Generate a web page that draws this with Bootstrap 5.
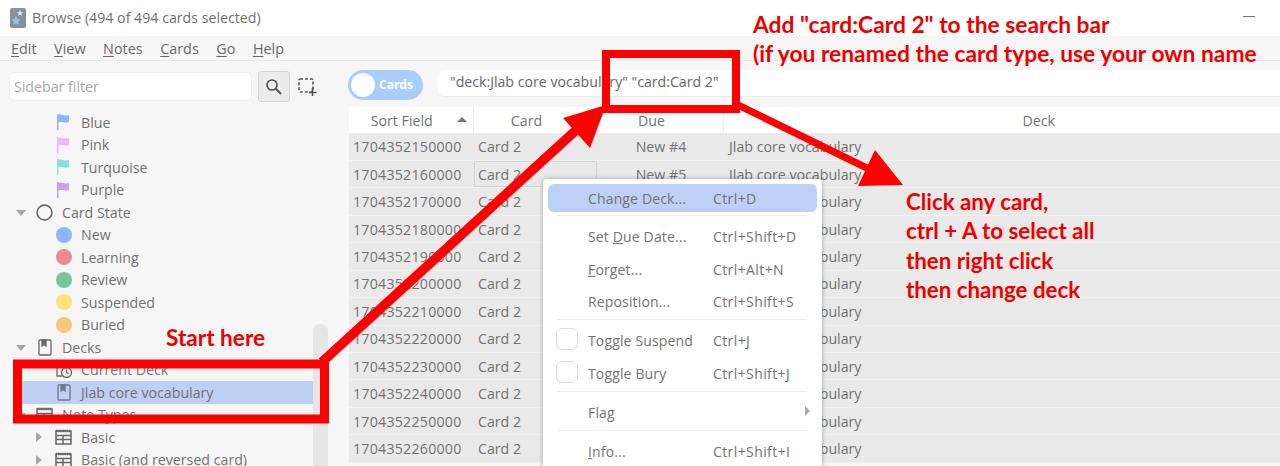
<!DOCTYPE html>
<html lang="en"><head><meta charset="utf-8"><title>Browse</title>
<link href="https://cdn.jsdelivr.net/npm/bootstrap@5.3.0/dist/css/bootstrap.min.css" rel="stylesheet">
<style>
html,body{height:466px;overflow:hidden}
body{background:#f6f6f6;color:#727272;font-family:"Open Sans","Noto Sans","Liberation Sans",sans-serif;font-size:14.2px;position:relative;line-height:1.2}
.titlebar{height:36px;background:#fff;padding-left:10px;gap:6px}
.titletext{color:#6f6f6f}
.winmin{position:absolute;left:1243px;top:16px;width:12px;height:1px;background:#777}
.menubar{height:25px;border-bottom:1px solid #e8e8e8;padding:1px 0 0 11px;gap:17.5px;color:#6a6a6a;font-size:14.4px}
.menubar u{text-underline-offset:2px}
.mainrow{height:405px}
.sidepane{width:340px;flex:none;position:relative}
.filterrow{height:47px;padding:10px 0 0 9px}
.filterbox{width:243px;height:29px;background:#fff;border:1px solid #eee;border-radius:6px;padding:0 4px;color:#a8a8a8;line-height:27px;margin-top:1px}
.searchbtn{width:32px;height:31px;margin-left:6px;background:#ececec;border:1px solid #d5d5d5;border-radius:3px}
.selecticon{margin-left:8px;margin-top:7px}
.treelist{list-style:none;margin:3px 0 0;padding:0;height:358px;overflow:hidden}
.treeitem{height:22.5px;display:flex;align-items:center;position:relative;white-space:nowrap}
.icobox{width:19px;flex:none;display:flex;justify-content:center;align-items:center}
.lv0{padding-left:35px}.lv1{padding-left:54px}
.lab{margin-left:8px}
.caret-dn{position:absolute;left:16px;top:9px;border:5px solid transparent;border-top:6px solid #a6a6a6;border-bottom:0}
.caret-rt{position:absolute;left:36px;top:6px;border:5px solid transparent;border-left:6px solid #a6a6a6;border-right:0}
.sel-row{background:#bdd0f3;margin-left:13px;padding-left:41px;width:300px}
.dot{width:16px;height:16px;border-radius:50%;display:block}
.scrolltrack{position:absolute;left:313px;top:263px;width:15px;height:160px;background:#e6e6e6;border-radius:7px}
.rightpane{flex:1;min-width:0;padding-left:9px;overflow:hidden}
.toolrow{height:46px;padding-top:8px;margin-left:-1px}
.togglepill{width:75px;height:30px;background:#a9cdfc;border-radius:15px;color:#fff;font-weight:700;font-size:12px;position:relative;padding-left:31px;line-height:30px;margin-top:1px}
.togglepill::before{content:"";position:absolute;left:3px;top:3px;width:24px;height:24px;background:#fff;border-radius:50%}
.queryinput{flex:1;margin-left:15px;height:27px;background:#fff;border-radius:6px 0 0 6px;border-bottom:1px solid #ececec;padding-left:12px;line-height:24px;color:#666;white-space:nowrap;margin-top:1px;letter-spacing:-.02px}
.cardtable{margin:0;table-layout:fixed;width:1024px;max-width:none;--bs-table-bg:transparent;--bs-table-color:#727272;border-color:#f3f3f3}
.cardtable th{height:26px;background:#fff;font-weight:400;text-align:center;padding:2px 18px 0 0;vertical-align:middle;border-right:1px solid #eee;border-bottom:0;position:relative;color:#727272}
.cardtable td{height:27.45px;background:#e9e9e9;padding:0 4px 0 5px;vertical-align:middle;border-bottom:1px solid #f1f1f1;white-space:nowrap;overflow:hidden}
.cardtable td.numcell{letter-spacing:.24px;padding-left:4px}
.cardtable td.mid{text-align:center}
.cardtable td.deckcell{padding-left:6px}
.activecell{outline:1px solid #d3d3d3;outline-offset:-2px}
.sortarrow{position:absolute;left:108px;top:10px;border:5px solid transparent;border-bottom:5px solid #777;border-top:0}
.ctxmenu{display:block;position:absolute;left:543px;top:179px;width:279px;height:300px;background:#fff;border:0;border-radius:4px 4px 0 0;box-shadow:0 0 5px rgba(0,0,0,.3);padding:5px;margin:0;color:#727272;font-size:14px;--bs-dropdown-min-width:0}
.ctxitem{display:flex;align-items:center;height:28px;border-radius:6px;position:relative;padding:2px 0 0}
.ctxitem.tall{height:32.4px;padding-top:4px}
.ctxitem.hot{margin-bottom:3px}
.ctxitem .nm{margin-left:40px;width:125px;white-space:nowrap;letter-spacing:.15px}
.ctxitem .sc{letter-spacing:.4px;white-space:nowrap}
.ctxitem.hot{background:#bdd0f5}
.ctxsep{height:1px;background:#ececec;margin:2.3px 10px 3.5px 9px;opacity:1;border:0}
.chk{position:absolute;left:8px;top:5px;width:22px;height:22px;border:1px solid #dcdcdc;border-radius:6px;background:#fff}
.subarrow{position:absolute;left:257px;top:11px;border:5px solid transparent;border-left:5px solid #aaa;border-right:0}
.overlay{position:absolute;left:0;top:0;pointer-events:none}
.note{position:absolute;color:#ee0000;font-family:Lato,"Liberation Sans",sans-serif;font-weight:700;font-size:22.3px;line-height:29.4px;white-space:nowrap}
.note1{left:753px;top:10px;font-size:22.8px}
.note2{left:906px;top:187px}
.note3{left:166px;top:323px;font-size:22.6px}
</style></head><body>
<header class="titlebar d-flex align-items-center">
<svg width="16" height="20" viewBox="0 0 16 20"><rect x="0" y="0" width="16" height="20" rx="2" fill="#8c8f94"/><path d="M10 2l1 2 2 .3-1.500 1.400.4 2-1.900-1-1.800 1 .4-2L7 4.300 9 4z" fill="#d8e4ee"/><path d="M6 8l1.500 3 3.200.4-2.300 2.200.6 3.200L6 15.300 3 16.800l.6-3.200L1.300 11.400 4.500 11z" fill="#8cc6ee"/></svg>
<span class="titletext">Browse (494 of 494 cards selected)</span>
<span class="winmin"></span>
</header>
<nav class="menubar d-flex align-items-center">
<span><u>E</u>dit</span><span><u>V</u>iew</span><span><u>N</u>otes</span><span><u>C</u>ards</span><span><u>G</u>o</span><span><u>H</u>elp</span>
</nav>
<div class="mainrow d-flex">
<aside class="sidepane">
<div class="filterrow d-flex align-items-start">
<div class="filterbox">Sidebar filter</div>
<div class="searchbtn d-flex align-items-center justify-content-center"><svg width="18" height="18" viewBox="0 0 18 18" fill="none" stroke="#555" stroke-width="1.700"><circle cx="7" cy="7" r="5"/><path d="M10.800 10.800L16 16" stroke-width="2"/></svg></div>
<svg class="selecticon" width="19" height="19" viewBox="0 0 19 19" fill="none" stroke="#555" stroke-width="1.600"><rect x="1" y="1" width="14" height="13" rx="1" stroke-dasharray="3 2"/><path d="M14.500 10v8M11 14.500h7.500"/></svg>
</div>
<ul class="treelist">
<li class="treeitem lv1"><span class="icobox"><svg width="14" height="18" viewBox="0 0 14 18"><path d="M0 1h1.500v16H0zM1.500 2c3-1.500 5 1.500 9 .3 1 0 1.500-.3 1.500-.3v7c-4 2-6-1-10.500.5z" fill="#8fb8f7"/></svg></span><span class="lab">Blue</span></li>
<li class="treeitem lv1"><span class="icobox"><svg width="14" height="18" viewBox="0 0 14 18"><path d="M0 1h1.500v16H0zM1.500 2c3-1.500 5 1.500 9 .3 1 0 1.500-.3 1.500-.3v7c-4 2-6-1-10.500.5z" fill="#f0b6f7"/></svg></span><span class="lab">Pink</span></li>
<li class="treeitem lv1"><span class="icobox"><svg width="14" height="18" viewBox="0 0 14 18"><path d="M0 1h1.500v16H0zM1.500 2c3-1.500 5 1.500 9 .3 1 0 1.500-.3 1.500-.3v7c-4 2-6-1-10.500.5z" fill="#86e2d4"/></svg></span><span class="lab">Turquoise</span></li>
<li class="treeitem lv1"><span class="icobox"><svg width="14" height="18" viewBox="0 0 14 18"><path d="M0 1h1.500v16H0zM1.500 2c3-1.500 5 1.500 9 .3 1 0 1.500-.3 1.500-.3v7c-4 2-6-1-10.500.5z" fill="#c7a2f2"/></svg></span><span class="lab">Purple</span></li>
<li class="treeitem lv0"><i class="caret-dn"></i><span class="icobox"><svg width="17" height="17" viewBox="0 0 17 17" fill="none" stroke="#666" stroke-width="1.600"><circle cx="8.500" cy="8.500" r="7.400"/></svg></span><span class="lab">Card State</span></li>
<li class="treeitem lv1"><span class="icobox"><span class="dot" style="background:#8fb6fb"></span></span><span class="lab">New</span></li>
<li class="treeitem lv1"><span class="icobox"><span class="dot" style="background:#ee8a8a"></span></span><span class="lab">Learning</span></li>
<li class="treeitem lv1"><span class="icobox"><span class="dot" style="background:#78c79a"></span></span><span class="lab">Review</span></li>
<li class="treeitem lv1"><span class="icobox"><span class="dot" style="background:#fbe27a"></span></span><span class="lab">Suspended</span></li>
<li class="treeitem lv1"><span class="icobox"><span class="dot" style="background:#f9c77a"></span></span><span class="lab">Buried</span></li>
<li class="treeitem lv0"><i class="caret-dn"></i><span class="icobox"><svg width="14" height="17" viewBox="0 0 14 17" fill="none" stroke="#666" stroke-width="1.300"><rect x="1" y="1" width="12" height="15" rx="1"/><path d="M4 1h4v6L6 5.500 4 7z" fill="#666"/></svg></span><span class="lab">Decks</span></li>
<li class="treeitem lv1"><span class="icobox"><svg width="16" height="16" viewBox="0 0 16 16" fill="none" stroke="#666" stroke-width="1.300"><path d="M1 2v12h5M1 2h6"/><circle cx="10.500" cy="10.500" r="5"/><path d="M10.500 7.500v3l2 1.500"/></svg></span><span class="lab">Current Deck</span></li>
<li class="treeitem lv1 sel-row"><span class="icobox"><svg width="14" height="17" viewBox="0 0 14 17" fill="none" stroke="#6e7a90" stroke-width="1.300"><rect x="1" y="1" width="12" height="15" rx="1"/><path d="M4 1h4v6L6 5.500 4 7z" fill="#6e7a90"/></svg></span><span class="lab">Jlab core vocabulary</span></li>
<li class="treeitem lv0"><i class="caret-dn"></i><span class="icobox"><svg width="17" height="16" viewBox="0 0 17 16" fill="none" stroke="#666" stroke-width="1.500"><path d="M1 2h15" stroke-width="2.500" stroke-dasharray="1.500 .6"/><rect x="1" y="2" width="15" height="13"/><path d="M1 6.500h15M1 10.500h7M8 6.500V15M8 10.500h8"/></svg></span><span class="lab">Note Types</span></li>
<li class="treeitem lv1"><i class="caret-rt"></i><span class="icobox"><svg width="17" height="16" viewBox="0 0 17 16" fill="none" stroke="#666" stroke-width="1.500"><path d="M1 2h15" stroke-width="2.500" stroke-dasharray="1.500 .6"/><rect x="1" y="2" width="15" height="13"/><path d="M1 6.500h15M1 10.500h7M8 6.500V15M8 10.500h8"/></svg></span><span class="lab">Basic</span></li>
<li class="treeitem lv1"><i class="caret-rt"></i><span class="icobox"><svg width="17" height="16" viewBox="0 0 17 16" fill="none" stroke="#666" stroke-width="1.500"><path d="M1 2h15" stroke-width="2.500" stroke-dasharray="1.500 .6"/><rect x="1" y="2" width="15" height="13"/><path d="M1 6.500h15M1 10.500h7M8 6.500V15M8 10.500h8"/></svg></span><span class="lab">Basic (and reversed card)</span></li>
</ul>
<div class="scrolltrack"></div>
</aside>
<section class="rightpane">
<div class="toolrow d-flex align-items-start">
<div class="togglepill">Cards</div>
<div class="queryinput">"deck:Jlab core vocabulary" "card:Card 2"</div>
</div>
<table class="table cardtable">
<colgroup><col style="width:124px"><col style="width:125px"><col style="width:125px"><col></colgroup>
<thead><tr><th>Sort Field<i class="sortarrow"></i></th><th>Card</th><th>Due</th><th>Deck</th></tr></thead>
<tbody>
<tr><td class="numcell">1704352150000</td><td>Card 2</td><td class="mid">New #4</td><td class="deckcell">Jlab core vocabulary</td></tr>
<tr><td class="numcell">1704352160000</td><td class="activecell">Card 2</td><td class="mid">New #5</td><td class="deckcell">Jlab core vocabulary</td></tr>
<tr><td class="numcell">1704352170000</td><td>Card 2</td><td class="mid">New #6</td><td class="deckcell">Jlab core vocabulary</td></tr>
<tr><td class="numcell">1704352180000</td><td>Card 2</td><td class="mid">New #7</td><td class="deckcell">Jlab core vocabulary</td></tr>
<tr><td class="numcell">1704352190000</td><td>Card 2</td><td class="mid">New #8</td><td class="deckcell">Jlab core vocabulary</td></tr>
<tr><td class="numcell">1704352200000</td><td>Card 2</td><td class="mid">New #9</td><td class="deckcell">Jlab core vocabulary</td></tr>
<tr><td class="numcell">1704352210000</td><td>Card 2</td><td class="mid">New #10</td><td class="deckcell">Jlab core vocabulary</td></tr>
<tr><td class="numcell">1704352220000</td><td>Card 2</td><td class="mid">New #11</td><td class="deckcell">Jlab core vocabulary</td></tr>
<tr><td class="numcell">1704352230000</td><td>Card 2</td><td class="mid">New #12</td><td class="deckcell">Jlab core vocabulary</td></tr>
<tr><td class="numcell">1704352240000</td><td>Card 2</td><td class="mid">New #13</td><td class="deckcell">Jlab core vocabulary</td></tr>
<tr><td class="numcell">1704352250000</td><td>Card 2</td><td class="mid">New #14</td><td class="deckcell">Jlab core vocabulary</td></tr>
<tr><td class="numcell">1704352260000</td><td>Card 2</td><td class="mid">New #15</td><td class="deckcell">Jlab core vocabulary</td></tr>
</tbody></table>
</section>
</div>
<div class="dropdown-menu ctxmenu">
<div class="ctxitem hot"><span class="nm">Change Deck...</span><span class="sc">Ctrl+D</span></div>
<hr class="ctxsep">
<div class="ctxitem tall"><span class="nm">Set <u>D</u>ue Date...</span><span class="sc">Ctrl+Shift+D</span></div>
<div class="ctxitem tall"><span class="nm"><u>F</u>orget...</span><span class="sc">Ctrl+Alt+N</span></div>
<div class="ctxitem tall"><span class="nm">Reposition...</span><span class="sc">Ctrl+Shift+S</span></div>
<hr class="ctxsep">
<div class="ctxitem tall"><i class="chk"></i><span class="nm">Toggle Suspend</span><span class="sc">Ctrl+J</span></div>
<div class="ctxitem tall"><i class="chk"></i><span class="nm">Toggle Bury</span><span class="sc">Ctrl+Shift+J</span></div>
<hr class="ctxsep">
<div class="ctxitem tall"><span class="nm">Flag</span><i class="subarrow"></i></div>
<hr class="ctxsep">
<div class="ctxitem tall"><span class="nm"><u>I</u>nfo...</span><span class="sc">Ctrl+Shift+I</span></div>
</div>
<svg class="overlay" width="1280" height="466" viewBox="0 0 1280 466">
<rect x="17.500" y="364" width="307" height="55" fill="none" stroke="#f00" stroke-width="9"/>
<rect x="606" y="54" width="130" height="55" fill="none" stroke="#f00" stroke-width="8"/>
<path d="M322 362L585 122" stroke="#f00" stroke-width="9.500" fill="none"/>
<path d="M563 118L606 105L590 148Z" fill="#f00"/>
<path d="M738 105L875 172" stroke="#f00" stroke-width="7" fill="none"/>
<path d="M858 186L903 185L875 150Z" fill="#f00"/>
</svg>
<div class="note note1">Add "card:Card 2" to the search bar<br>(if you renamed the card type, use your own name</div>
<div class="note note2">Click any card,<br>ctrl + A to select all<br>then right click<br>then change deck</div>
<div class="note note3">Start here</div>
</body></html>
